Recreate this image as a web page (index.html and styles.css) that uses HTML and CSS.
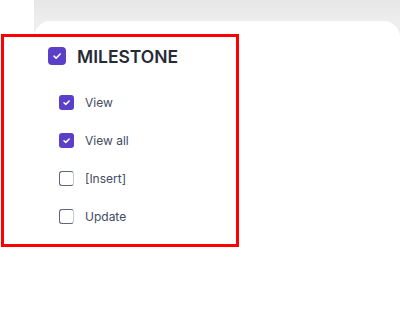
FILE: index.html
```html
<!DOCTYPE html>
<html>
<head>
<meta charset="utf-8">
<link rel="stylesheet" href="styles.css">
</head>
<body>
<div class="page">
  <aside class="strip"></aside>
  <main class="main">
    <div class="card">
      <section class="group">
        <div class="group-head">
          <span class="box box-lg checked">
            <svg viewBox="0 0 18 18" width="18" height="18"><path d="M6 9.2l2.1 2L12.2 7" fill="none" stroke="#fff" stroke-width="1.6" stroke-linecap="round" stroke-linejoin="round"/></svg>
          </span>
          <span class="group-title">MILESTONE</span>
        </div>
        <ul class="perm-list">
          <li class="perm">
            <span class="box checked"><svg viewBox="0 0 15 15" width="15" height="15"><path d="M5 7.7l1.8 1.7L10.2 6" fill="none" stroke="#fff" stroke-width="1.5" stroke-linecap="round" stroke-linejoin="round"/></svg></span>
            <span class="perm-label">View</span>
          </li>
          <li class="perm">
            <span class="box checked"><svg viewBox="0 0 15 15" width="15" height="15"><path d="M5 7.7l1.8 1.7L10.2 6" fill="none" stroke="#fff" stroke-width="1.5" stroke-linecap="round" stroke-linejoin="round"/></svg></span>
            <span class="perm-label">View all</span>
          </li>
          <li class="perm">
            <span class="box"></span>
            <span class="perm-label">[Insert]</span>
          </li>
          <li class="perm">
            <span class="box"></span>
            <span class="perm-label">Update</span>
          </li>
        </ul>
      </section>
    </div>
  </main>
</div>
</body>
</html>
```

FILE: styles.css
```css
html, body {
  margin: 0;
  padding: 0;
  background: #ffffff;
  font-family: Inter, "Noto Sans", sans-serif;
}
.page {
  display: flex;
  width: 400px;
  height: 336px;
  overflow: hidden;
}
.strip {
  width: 34px;
  flex: none;
  background: #ffffff;
}
.main {
  flex: 1;
  background: linear-gradient(#e6e6e6 0, #eeeeee 22px, #eeeeee 100%);
  padding-top: 21px;
}
.card {
  background: #ffffff;
  border-top-left-radius: 16px;
  border-top-right-radius: 16px;
  height: 100%;
  padding-top: 13px;
}
.group {
  margin-left: -33px;
  border: 3px solid #ff0000;
  padding: 10px 0 0 44px;
  box-sizing: content-box;
  width: 188px;
  height: 197px;
}
.group-head {
  display: flex;
  align-items: center;
  height: 18px;
  gap: 11px;
}
.group-title {
  font-size: 17.5px;
  font-weight: 600;
  color: #262b36;
}
.box {
  flex: none;
  width: 15px;
  height: 15px;
  border-radius: 3px;
  box-sizing: border-box;
  border: 1.5px solid #5f6675;
  border-right-color: #c5c9d0;
  display: flex;
  align-items: center;
  justify-content: center;
}
.box.checked {
  background: #5b3fc8;
  border: none;
}
.box-lg {
  width: 18px;
  height: 18px;
  border-radius: 4px;
}
.perm-list {
  list-style: none;
  margin: 18px 0 0 11px;
  padding: 0;
}
.perm {
  display: flex;
  align-items: center;
  height: 38px;
  gap: 11px;
}
.perm-label {
  font-size: 12px;
  color: #434a64;
}
```
